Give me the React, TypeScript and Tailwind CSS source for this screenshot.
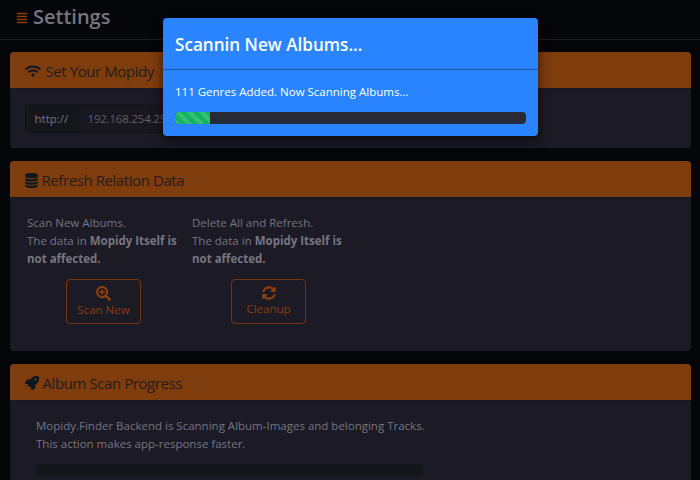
import { FaAlignJustify, FaWifi, FaRocket, FaSearchPlus, FaSyncAlt } from "react-icons/fa";
import type { ReactNode } from "react";

function DatabaseIcon({ className }: { className?: string }) {
  return (
    <svg viewBox="0 0 1536 1792" fill="currentColor" className={className}>
      <path d="M768 768q237 0 443-43t325-127v170q0 69-103 128t-280 93.500-385 34.500-385-34.500-280-93.500-103-128v-170q119 84 325 127t443 43zm0 768q237 0 443-43t325-127v170q0 69-103 128t-280 93.500-385 34.500-385-34.500-280-93.500-103-128v-170q119 84 325 127t443 43zm0-384q237 0 443-43t325-127v170q0 69-103 128t-280 93.500-385 34.500-385-34.500-280-93.500-103-128v-170q119 84 325 127t443 43zm0-1152q208 0 385 34.500t280 93.500 103 128v128q0 69-103 128t-280 93.500-385 34.500-385-34.500-280-93.500-103-128v-128q0-69 103-128t280-93.500 385-34.500z" />
    </svg>
  );
}

function Panel({ icon, title, className, children }: { icon: ReactNode; title: string; className: string; children: ReactNode }) {
  return (
    <section className={`mx-[9.5px] shrink-0 overflow-hidden rounded bg-[#1b1a25] ${className}`}>
      <h2 className="flex h-[37px] items-center border-b border-[#17141c] bg-[#7f3c0d] pl-[15px] pt-[2px] text-[15px] tracking-[-0.42px] text-[#251d1d]">
        {icon}
        <span>{title}</span>
      </h2>
      {children}
    </section>
  );
}

function Action({ first, icon, label }: { first: string; icon: ReactNode; label: string }) {
  return (
    <div className="flex w-[153px] flex-col">
      <p className="h-[54px] whitespace-nowrap leading-[18px]">
        {first}
        <br />
        The data in <b>Mopidy Itself is</b>
        <br />
        <b>not affected.</b>
      </p>
      <button className="mt-[11px] flex h-[45px] w-[75px] flex-col items-center self-center rounded border border-[#75360f] pt-[6px] leading-[18px] text-[#8b3d0e]">
        {icon}
        <span>{label}</span>
      </button>
    </div>
  );
}

export default function App() {
  return (
    <div className="relative flex h-[480px] w-[700px] flex-col overflow-hidden bg-[#050609] font-['Open_Sans','Noto_Sans',sans-serif] text-[11.500px] text-[#777581]">
      <header className="flex h-10 shrink-0 items-center border-b border-[#1d1e22] pb-[6px] pl-4">
        <FaAlignJustify className="mr-[5px] mt-[3px] size-3 text-[#8b3d0e]" />
        <h1 className="text-[20px] font-semibold">Settings</h1>
      </header>

      <Panel className="mt-[12px] h-[96px]" icon={<FaWifi className="mr-[5px] size-4 text-[#0f171e]" />} title="Set Your Mopidy">
        <div className="ml-[15px] mt-[15px] flex h-[29px] w-[300px] items-center rounded border border-[#111118] bg-[#181720]">
          <span className="flex h-full w-[53px] items-center border-r border-[#111118] bg-[#15151c] pl-[9px] pt-px">http://</span>
          <span className="pl-[9px] pt-px tracking-[-0.2px] text-[#5f5e69]">192.168.254.251</span>
        </div>
      </Panel>

      <Panel className="mt-[13px] h-[190px]" icon={<DatabaseIcon className="mr-1 h-[15px] w-[13px] text-[#0f171e]" />} title="Refresh Relation Data">
        <div className="flex gap-3 pl-[17.500px] pt-[16px]">
          <Action first="Scan New Albums." icon={<FaSearchPlus className="size-[15px]" />} label="Scan New" />
          <Action first="Delete All and Refresh." icon={<FaSyncAlt className="size-[14px]" />} label="Cleanup" />
        </div>
      </Panel>

      <Panel className="mt-[13px] h-[130px]" icon={<FaRocket className="mr-1 size-[14px] text-[#0f171e]" />} title="Album Scan Progress">
        <div className="pl-[26.500px] pt-[16px] leading-[18px]">
          <p>Mopidy.Finder Backend is Scanning Album-Images and belonging Tracks.</p>
          <p>This action makes app-response faster.</p>
          <div className="mt-[11px] h-3 w-[387px] rounded bg-[#15151c]" />
        </div>
      </Panel>

      <div role="dialog" className="absolute left-[163px] top-[18px] h-[118px] w-[375px] rounded bg-[#2a84ff] text-white shadow-[0_4px_12px_rgba(0,0,0,0.6)]">
        <h3 className="flex h-[52px] items-center border-b border-[#1e56a5] pl-3 pt-[3px] text-[17.100px] font-semibold">Scannin New Albums...</h3>
        <p className="mt-[13px] pl-3 leading-[18px]">111 Genres Added. Now Scanning Albums...</p>
        <div className="mx-3 mt-[11px] h-3 overflow-hidden rounded bg-[#282a36]">
          <div className="h-full w-[10%] bg-[#13b35f] bg-[linear-gradient(45deg,rgba(255,255,255,.15)_25%,transparent_25%,transparent_50%,rgba(255,255,255,.15)_50%,rgba(255,255,255,.15)_75%,transparent_75%,transparent)] bg-[length:12px_12px]" />
        </div>
      </div>
    </div>
  );
}
